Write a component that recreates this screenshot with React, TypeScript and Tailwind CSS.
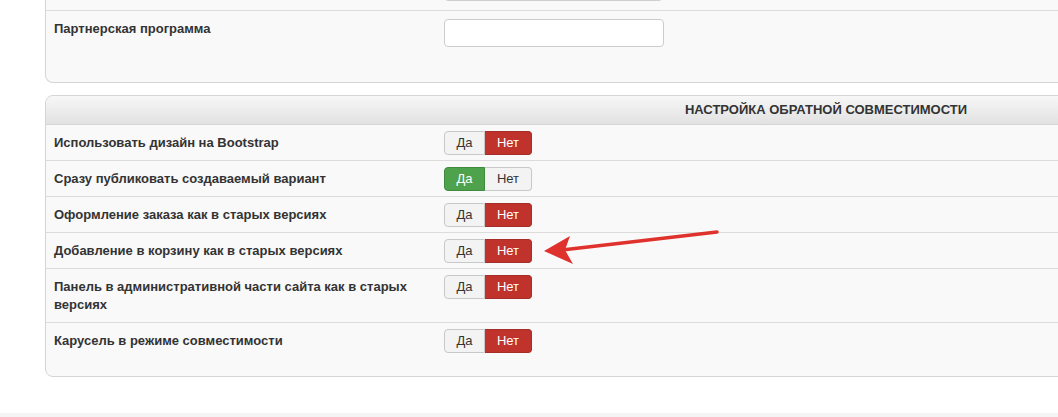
import React from 'react';

const rows: { label: string; value: boolean; tall?: boolean }[] = [
  { label: 'Использовать дизайн на Bootstrap', value: false },
  { label: 'Сразу публиковать создаваемый вариант', value: true },
  { label: 'Оформление заказа как в старых версиях', value: false },
  { label: 'Добавление в корзину как в старых версиях', value: false },
  { label: 'Панель в административной части сайта как в старых версиях', value: false, tall: true },
  { label: 'Карусель в режиме совместимости', value: false },
];

function Toggle({ value }: { value: boolean }) {
  return (
    <div className="flex h-[24px] text-[13px] leading-[22px]">
      <span
        className={`w-[41px] rounded-l-[4px] border text-center ${
          value ? 'border-[#3e8a3e] bg-[#4ea24c] text-white' : 'border-[#c8c8c8] bg-[#f3f3f3] text-[#333]'
        }`}
      >
        Да
      </span>
      <span
        className={`w-[47px] rounded-r-[4px] border border-l-0 text-center ${
          value ? 'border-[#c8c8c8] bg-[#f3f3f3] text-[#333]' : 'border-[#a52e28] bg-[#c0322c] text-white'
        }`}
      >
        Нет
      </span>
    </div>
  );
}

export default function App() {
  return (
    <div className="relative h-[417px] w-[1058px] overflow-hidden bg-white font-['Liberation_Sans',Arial,sans-serif] text-[#333]">
      <div className="-mt-[26px]">
        {/* top panel (only bottom part visible) */}
        <div className="ml-[45px] w-[1562px] rounded-b-[8px] border border-t-0 border-[#d4d4d4] bg-[#f9f9f9]">
          <div className="flex h-[37px] border-b border-[#dcdcdc]">
            <div className="w-[398px]" />
            <div className="flex h-[27px] w-[219px] rounded-[4px] border border-[#cfcfcf] bg-white">
              <div className="flex-1" />
              <div className="w-[27px] border-l border-[#cfcfcf] bg-[#f3f3f3]" />
            </div>
          </div>
          <div className="flex h-[71px] pt-[8px]">
            <div className="w-[398px] pl-[8px] pt-[1px] text-[13px] font-bold leading-[17px]">Партнерская программа</div>
            <div className="h-[28px] w-[220px] rounded-[4px] border border-[#cccccc] bg-white" />
          </div>
        </div>

        {/* compatibility settings */}
        <div className="ml-[45px] mt-[12px] w-[1562px] rounded-[8px] border border-[#d4d4d4] bg-[#f9f9f9]">
          <div className="flex h-[29px] items-center justify-center rounded-t-[8px] border-b border-[#d6d6d6] bg-gradient-to-b from-[#f7f7f7] to-[#e2e2e2] text-[13px] font-bold text-[#333]">
            НАСТРОЙКА ОБРАТНОЙ СОВМЕСТИМОСТИ
          </div>
          {rows.map((r, i) => {
            const last = i === rows.length - 1;
            return (
              <div
                key={i}
                className={`flex pt-[6px] ${last ? 'h-[53px]' : r.tall ? 'h-[54px] border-b border-[#dcdcdc]' : 'h-[36px] border-b border-[#dcdcdc]'}`}
              >
                <div className="w-[398px] pl-[8px] pr-[26px] pt-[3px] text-[13px] font-bold leading-[18px]">{r.label}</div>
                <Toggle value={r.value} />
              </div>
            );
          })}
        </div>
      </div>

      <div className="absolute bottom-0 left-0 h-[4px] w-full bg-[#f4f4f4]" />

      {/* annotation arrow */}
      <svg className="pointer-events-none absolute left-0 top-0" width="1058" height="417">
        <line x1="717" y1="232" x2="562" y2="250" stroke="#e0322c" strokeWidth="3.5" strokeLinecap="round" />
        <polygon points="544,251 570,236 565,250 573,264" fill="#e0322c" />
      </svg>
    </div>
  );
}
